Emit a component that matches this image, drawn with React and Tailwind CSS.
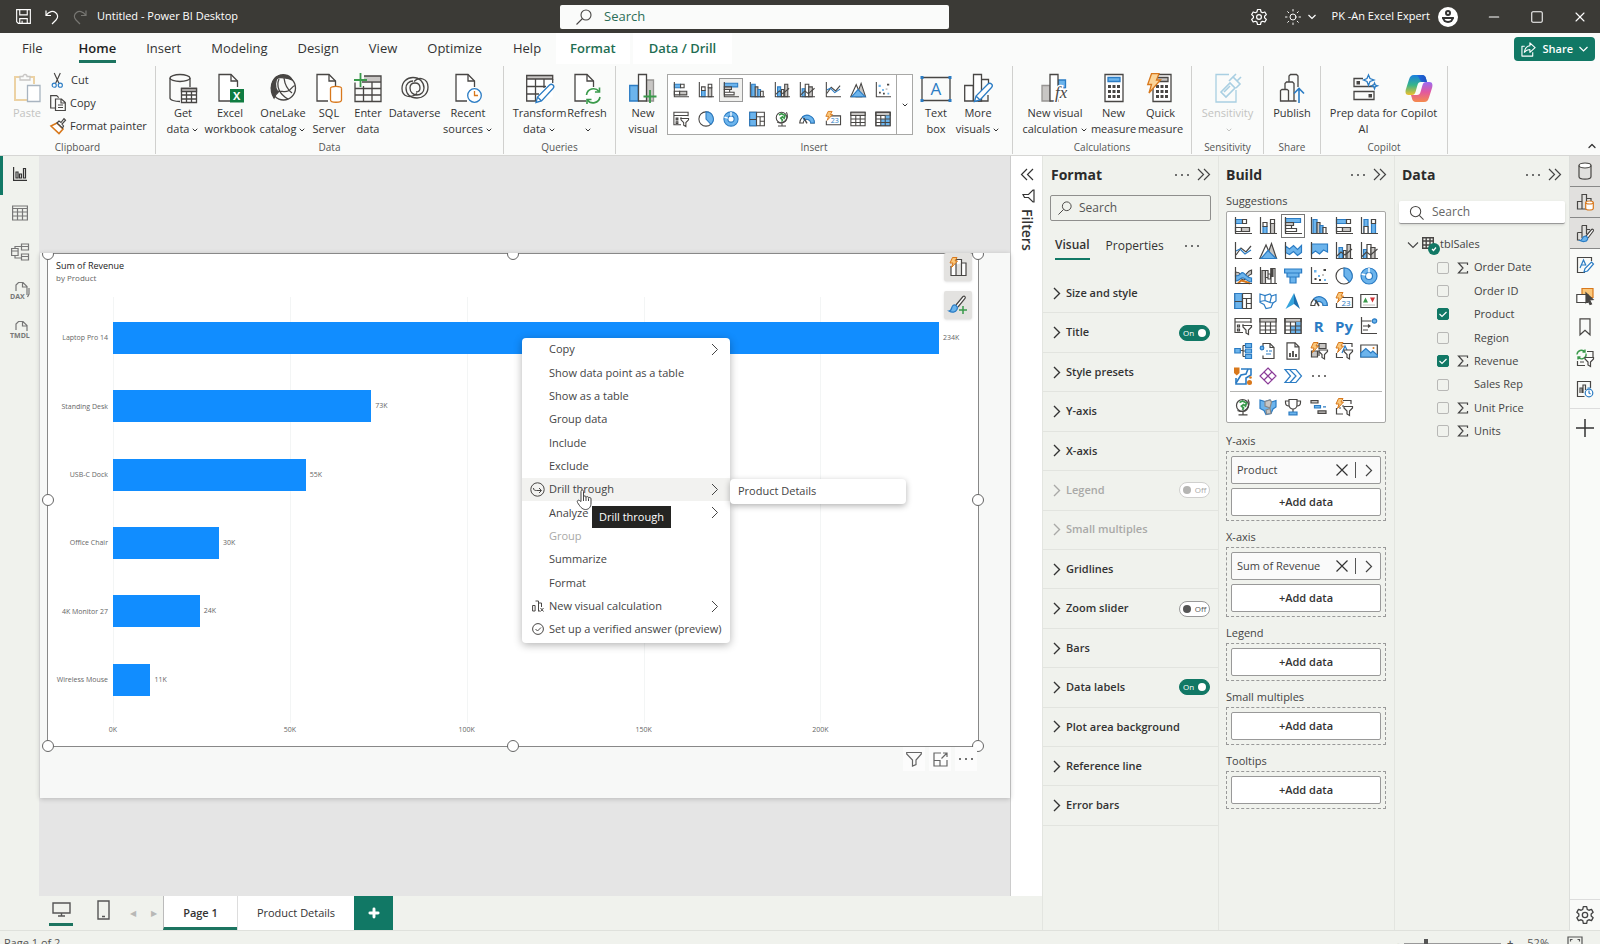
import React from 'react';
import { ChevronDown, ChevronUp, X, Minus, Square, Plus, Sun } from 'lucide-react';

const K = '#484644';
const B = '#6cb4ec';
const D = '#2b7cc4';
const G = '#c8c6c4';
const O = '#d8781c';
const N = '#3a9a4b';

function Svg({ size = 18, box = 18, w, h, stroke = K, sw = 1.2, className = '', children }) {
  return (
    <svg aria-hidden="true" width={w || size} height={h || size} viewBox={`0 0 ${w ? w : box} ${h ? h : box}`} fill="none"
      stroke={stroke} strokeWidth={sw} className={`shrink-0 overflow-visible ${className}`}>
      {children}
    </svg>
  );
}

const Right = ({ sw = 1.3 }) => <Svg w={8} h={13} stroke="currentColor" sw={sw}><path d="M1 1l5.500 5.500L1 12" /></Svg>;
const Down = ({ sw = 1.3 }) => <Svg w={12} h={8} stroke="currentColor" sw={sw}><path d="M1 1.500l5 5 5-5" /></Svg>;
const DoubleRight = ({ className = '' }) => (
  <Svg w={14} h={13} stroke="currentColor" className={className}><path d="M1 1l5.500 5.500L1 12M7 1l5.500 5.500L7 12" /></Svg>
);

const Axes = () => <path d="M1.5 0v16.5H18" />;
const Bolt = ({ x = 0, y = 0 }) => (
  <path transform={`translate(${x} ${y})`} d="M3.5 .5h4.5L6 4h2.5L2.5 10.500l1.500-4.500H1z" fill="#fbc77a" stroke={O} strokeWidth="1" />
);
const Funnel = ({ x = 9, y = 8 }) => (
  <path transform={`translate(${x} ${y})`} d="M0 .5h8.500v1.500L5.500 5v4.500l-2.500-1.500V5L0 2z" fill="#fff" />
);

/* ---- visual type glyphs, drawn on an 18 x 18 grid ---- */
const V = {
  stackedBar: <><path d="M1.500 2.500h7v4h-7z" fill={B} stroke={D} /><path d="M8.500 2.500h4v4h-4z" fill="#fff" /><path d="M1.500 10.500h6v4h-6z" fill="#fff" /><path d="M7.500 10.500h8v4h-8z" fill={G} /><Axes /></>,
  stackedCol: <><path d="M4 9.500h4v7H4z" fill={B} stroke={D} /><path d="M4 5.500h4v4H4z" /><path d="M11.500 6.500h4v10h-4z" fill={G} /><path d="M11.500 2.500h4v4h-4z" fill="#fff" /><Axes /></>,
  clusteredBar: <><path d="M1.500 1.500h15v4h-15z" fill={B} stroke={D} /><path d="M1.500 5.500h8v3h-8z" fill={G} /><path d="M1.500 8.500h6v3h-6zM1.500 11.500h11v3h-11z" fill="#fff" /><Axes /></>,
  clusteredCol: <><path d="M3 2.500h4v14H3z" fill={B} stroke={D} /><path d="M7 5.500h3v11H7z" fill={G} /><path d="M10 8.500h3v8h-3z" fill={B} stroke={D} /><path d="M13 10.500h3v6h-3z" fill="#fff" /><Axes /></>,
  fullBar: <><path d="M1.500 2.500h10v4h-10z" fill={B} stroke={D} /><path d="M11.500 2.500h4v4h-4z" fill="#fff" /><path d="M1.500 10.500h6v4h-6z" fill="#fff" /><path d="M7.500 10.500h8v4h-8z" fill={G} /><Axes /></>,
  fullCol: <><path d="M4 2.500h4v14H4z" fill={B} stroke={D} /><path d="M4 9.500h4v7H4z" fill="#fff" /><path d="M11.500 2.500h4v14h-4z" fill={B} stroke={D} /><path d="M11.500 2.500h4v4h-4z" fill="#fff" /><Axes /></>,
  line: <><path d="M2 13l5-7 5 4 5-6" /><path d="M2 9l4-2 5 5 6-4" stroke={D} /><Axes /></>,
  area: <><path d="M7 16.500L12.500 1.500l5 15z" fill={G} /><path d="M.8 16.500L7 3l6 13.500z" fill="#fff" /><path d="M2 16.500l7-8 8 8z" fill={B} stroke={D} /></>,
  stackedArea: <><path d="M1.500 9l4 3 5-4 3 2 4-3v9.500h-16z" fill="#fff" stroke="none" /><path d="M1.500 4l4 3 4-3.500 4 4 4-4v7l-4 3-4-4-4 3-4-2z" fill={B} stroke={D} /><Axes /></>,
  fullArea: <><path d="M1.500 2h16v8l-4-2-4 4-4-3-4 3z" fill={B} stroke={D} /><Axes /></>,
  lineStacked: <><path d="M4 5.500h3.500v11H4z" fill={B} stroke={D} /><path d="M8.500 8.500H11v8H8.500z" fill="#fff" /><path d="M12 2.500h3.500v14H12z" fill={G} /><path d="M2 14l4-4 4 3 7-6" stroke={K} /><Axes /></>,
  lineClustered: <><path d="M3.500 7.500h3.500v9H3.500z" fill={B} stroke={D} /><path d="M7 2.500h4v14H7z" fill="#fff" /><path d="M11 5.500h4v11h-4z" fill={G} /><path d="M1.500 15l5-5 4 3 7-6" /><Axes /></>,
  ribbon: <><path d="M1.500 5c6 0 5 4 8 4s3-5 8-6v4c-4 1-5 6-8 6s-3-4-8-4z" fill={G} /><path d="M1.500 9c6 0 5-5 8-3s3 5 8 5v4c-4 0-5-3-8-4s-4 3-8 3z" fill={B} stroke={D} /><path d="M4 16.500l3-3 4 1 5 2" stroke={O} strokeWidth="2" /><Axes /></>,
  waterfall: <><path d="M3 3.500h3.500v13H3z" fill={G} /><path d="M6.500 3.500H9v7H6.500zM9 7h2.500v5H9z" fill="#fff" /><path d="M12 1.500h4v15h-4z" fill="#fff" /><path d="M12 1.500h2v8h-2z" fill={K} /><Axes /></>,
  funnel: <><path d="M.6 2h17v4h-17zM3 6h12v4H3zM6 10h6v6H6z" fill={B} stroke={D} /></>,
  scatter: <><path d="M4 3h2.500v2.500H4zM8 8h2v2H8zM14 12h2v2h-2z" fill={B} stroke="none" /><path d="M13.500 2H16v2h-2.500zM4.500 11h2v2h-2zM9 12h2v2H9z" fill={K} stroke="none" /><path d="M12 7h2v2h-2z" fill={G} stroke="none" /><Axes /></>,
  pie: <><circle cx="9" cy="9" r="8" fill="#fff" /><path d="M9 9V1a8 8 0 0 1 5.500 14z" fill={B} stroke={D} /></>,
  donut: <><circle cx="9" cy="9" r="8" fill={B} stroke={D} /><circle cx="9" cy="9" r="3.500" fill="#fff" stroke={D} /><path d="M9 1v4.500M1.500 7l4 1" stroke="#fff" strokeWidth="1.500" /></>,
  treemap: <><path d="M.8 1.500h16.500v15H.8z" fill="#fff" /><path d="M.8 1.500h7.500v15H.8z" fill={B} stroke={D} /><path d="M.8 9.500h7.500M8.500 1.500v15M8.500 6.500h9M12.500 6.500v10M12.500 11.500h5" /></>,
  map: <><circle cx="8.500" cy="7.500" r="6" fill="#fff" /><path d="M5.500 4.500l3-1.500 4 2-1 3-2-1.500-2 1.500 2 2-1 2" stroke={N} strokeWidth="1.800" /><path d="M14 1.500a8 8 0 0 1-10.500 11M9 14v2.500M4.500 16.800h9" /></>,
  filled: <><path d="M1 2l5 1.500L11 2l1.500 2L17 2.500V9l-3 2-2 4.500-5 1-2-4-4-2z" fill="#fff" stroke={D} /><path d="M6 3.500v5l5 2 1.500-6.500M6 8.500l-5 1M11 10.500l3 .5" stroke={D} /></>,
  filledShape: <><path d="M1 2l5 1.500L11 2l1.500 2L17 2.500V9l-3 2-2 4.500-5 1-2-4-4-2z" fill={B} stroke={D} /><path d="M6 3.500l5-1.500 1.500 2-1.500 6-5-2zM7 12l4-1.500 1 5-4.500.500z" fill={G} stroke="#888" /></>,
  azure: <><path d="M10 1L1.500 17 10 12z" fill="#35a3dc" stroke="none" /><path d="M10 1v11l6 5z" fill="#1b6fb0" stroke="none" /></>,
  gauge: <><path d="M.8 13.500a8.200 8.200 0 0 1 16.400 0h-4a4.200 4.200 0 0 0-8.400 0z" fill="#fff" /><path d="M4 6.500a8.200 8.200 0 0 1 13.200 7h-4a4.200 4.200 0 0 0-7-3z" fill={B} stroke={D} /><path d="M9 14l-3.500-6" strokeWidth="1.600" /></>,
  card: <><path d="M3 5.500h14.500v10H1.500V11" fill="#fff" /><text x="6.500" y="13.500" fontSize="8" fill={D} stroke="none">23</text><Bolt /></>,
  kpi: <><path d="M.8 2.500h16.500v13H.8z" fill="#fff" /><path d="M3 10.500l2.500-5 2.500 5z" fill={N} stroke="none" /><path d="M10 5.500h5l-2.500 5z" fill="#d13438" stroke="none" /><path d="M3 13h12" stroke={G} /></>,
  slicer: <><path d="M17 6V1.500H1v14h8M1 5h16" /><path d="M3.500 8h2v2h-2zM3.500 12h2v2h-2zM8 8h2" stroke={K} fill={G} /><Funnel /></>,
  table: <><path d="M1 1.500h16v15H1z" fill="#fff" /><path d="M1 1.500h16V5H1z" fill={G} /><path d="M1 9h16M1 13h16M6.500 5v11.500M11.500 5v11.500" /></>,
  matrix: <><path d="M1 1.500h16v15H1z" fill="#fff" /><path d="M1 1.500h16V5H1z" fill={G} /><path d="M6.500 9h10.500v7.500H6.500zM11.500 5H17v4h-5.500z" fill={B} stroke="none" /><path d="M1 9h16M1 13h16M6.500 5v11.500M11.500 5v11.500M1 1.500h16v15H1z" /></>,
  influencers: <><path d="M1.500 0v16.500H17M1.500 4h10M3 9h7M3 13h5M8 7.500l2 1.500-2 1.500" /><circle cx="14.500" cy="4" r="2.200" fill={B} stroke={D} /></>,
  decomp: <><path d="M6 8.500h3M9 3.500v11M9 3.500h3M9 9h3M9 14.500h3" /><path d="M.8 6.500h5.500v4.500H.8zM11.500 1.500h6v4h-6zM11.500 7h6v4h-6zM11.500 12.500h6v4h-6z" fill={B} stroke={D} /></>,
  qa: <><path d="M4 8V1.500h7l4 4v11H4v-3" fill="#fff" /><path d="M11 1.500v4h4" /><path d="M7 9h2M10 9h3M7 12h5" stroke={D} /><circle cx="3" cy="6" r="1.800" fill={B} stroke={D} /></>,
  paginated: <><path d="M3 .8h8l4 4v12.400H3z" fill="#fff" /><path d="M11 .8v4h4" /><path d="M6 11v4M9 9v6M12 12v3" strokeWidth="1.800" /></>,
  metrics: <><path d="M9 1.500h7v5H9zM1.500 9h6v6h-6z" fill={G} /><path d="M9 9v5M5 4h4" /><Funnel x={9} y={7.500} /><Bolt /></>,
  narrative: <><path d="M8 1.500h9V5M1.500 11v4.500H8" /><path d="M7 11l3-7 2 4" stroke={D} /><Funnel x={9} y={7.500} /><Bolt /></>,
  image: <><path d="M.8 3h16.500v12H.8z" fill="#fff" /><path d="M.8 15V11l5-4.500 5 4.500 2-2 4.500 4v2z" fill={B} stroke={D} /><circle cx="13.500" cy="6" r="1" fill={O} stroke="none" /></>,
  arcgis: <><path d="M7 2h10v6l-5 3v6H2v-6" fill="#fff" stroke={D} strokeWidth="1.600" /><path d="M2 16l5-8 5-1 2-5" stroke={D} strokeWidth="1.600" /><path d="M0 .5h5.500V6L2.800 8.500 0 6z" fill={O} stroke="none" /><circle cx="15.500" cy="15.500" r="2.500" fill={O} stroke="none" /><circle cx="16.500" cy="10.500" r="1.300" fill={O} stroke="none" /></>,
  powerapps: <><path d="M9 1l4 4-4 4-4-4zM5 5l4 4-4 4-4-4zM13 5l4 4-4 4-4-4zM9 9l4 4-4 4-4-4z" fill="#fff" stroke="#8a3a97" /></>,
  automate: <><path d="M1 2.500h11l5.500 6.500-5.500 6.500H1L6.500 9z" fill="#fff" stroke={D} /><path d="M5.500 2.500L12 9l-6 6.500M9 12l3-3" stroke={D} /></>,
  more: <><circle cx="3" cy="9" r="1" fill={K} stroke="none" /><circle cx="9" cy="9" r="1" fill={K} stroke="none" /><circle cx="15" cy="9" r="1" fill={K} stroke="none" /></>,
  trophy: <><path d="M5 1.500h8V7a4 4 0 0 1-8 0z" fill="#fff" /><path d="M5 3H1.500v1.500C1.500 7 3 8 5 8M13 3h3.500v1.500c0 2.500-1.500 3.500-3.500 3.500M9 11v3" /><path d="M5 14h8v2.800H5z" fill={B} stroke={D} /></>,
  gantt: <><path d="M1 2.500h7v2.500H1zM8 12.800h8v2.500H8z" fill={G} /><path d="M4.500 7.500h6V10h-6zM13 8.800h3" fill={B} stroke={D} /></>,
  newSlicer: <><path d="M8 2.500h8V6M1.500 10v6H8M4 10h2M7 8h2" /><Funnel x={9} y={8} /><Bolt /></>
};

function VisualIcon({ name, size }) {
  if (name === 'R' || name === 'Py') {
    return <span className="text-[15px] leading-6 font-bold text-[#2b7cc4]">{name}</span>;
  }
  return <Svg size={size}>{V[name]}</Svg>;
}

const GALLERY = [
  'stackedBar', 'stackedCol', 'clusteredBar', 'clusteredCol', 'lineStacked', 'lineClustered', 'line', 'area', 'scatter',
  'slicer', 'pie', 'donut', 'treemap', 'map', 'gauge', 'card', 'table', 'matrix'
];

const SUGGESTIONS = [
  'stackedBar', 'stackedCol', 'clusteredBar', 'clusteredCol', 'fullBar', 'fullCol',
  'line', 'area', 'stackedArea', 'fullArea', 'lineStacked', 'lineClustered',
  'ribbon', 'waterfall', 'funnel', 'scatter', 'pie', 'donut',
  'treemap', 'filled', 'azure', 'gauge', 'card', 'kpi',
  'slicer', 'table', 'matrix', 'R', 'Py', 'influencers',
  'decomp', 'qa', 'paginated', 'metrics', 'narrative', 'image',
  'arcgis', 'powerapps', 'automate', 'more'
];

const EXTRA = ['map', 'filledShape', 'trophy', 'gantt', 'newSlicer'];

/* ---- ribbon glyphs, drawn on a 28 x 30 grid ---- */
const Big = ({ children, stroke = K }) => <Svg w={28} h={30} stroke={stroke} sw={1.3}>{children}</Svg>;
const Page = () => <><path d="M4 1.500h13l6 6V28H4z" fill="#fff" stroke="none" /><path d="M15 28H4V1.500h12l6.500 6.500V14" /><path d="M16 1.500V8h6.500" /></>;
const Pencil = ({ x = 10, y = 10 }) => (
  <path transform={`translate(${x} ${y})`} d="M.5 18.500l1.500-5.500L14 1c1-1 2.500-1 3.500 0s1 2.500 0 3.500L6 17zM2 13l4 4" fill="#fff" stroke={D} strokeWidth="1.300" />
);

const RI = {
  paste: <Big><path d="M7 4H2v23h12" stroke="#ecd2a4" strokeWidth="2" /><path d="M17 4h4v7" stroke="#ecd2a4" strokeWidth="2" /><path d="M7 7V3.500h3a2 2 0 0 1 4 0h3V7z" stroke={G} /><path d="M14.500 12.500h12.500v16H14.500z" stroke="#a8b4c0" fill="#fff" /></Big>,
  getData: <Big><ellipse cx="11" cy="5" rx="10" ry="3.500" /><path d="M1 5v20c0 2 4.500 3.500 10 3.500M21 5v9" /><path d="M12.500 15.500h15v14h-15z" fill="#fff" /><path d="M12.500 15.500h15v3h-15z" fill={G} /><path d="M12.500 22h15M12.500 26h15M17.500 18v11.500M22.500 18v11.500" /></Big>,
  excel: <Big><g transform="translate(-1)"><Page /></g><path d="M14 16h14v13.500H14z" fill="#107c41" stroke="none" /><text x="17" y="27" fontSize="11" fontWeight="700" fill="#fff" stroke="none">X</text></Big>,
  onelake: <Big><path d="M10 2.500C2 5 0 17 5 25c1-3 2-4 4-5.500C5 14 6 7 10 2.500z" fill={K} /><circle cx="14.500" cy="15" r="12" /><path d="M8 5c3-5 13-4 15 2-4-2-11-3-15-2z" fill={K} /><path d="M10 6c-3 7 0 15 9 20M15 5c1 8 4 12 8 15M6 20c3-4 9 0 13-2s5-6 7-5" /></Big>,
  sql: <Big><g transform="translate(-2)"><Page /></g><ellipse cx="21" cy="15.500" rx="5.500" ry="2.200" stroke={O} fill="#fff" /><path d="M15.500 15.500v11.500c0 3 11 3 11 0V15.500" stroke={O} fill="#fff" /></Big>,
  enter: <Big><path d="M10 3h17v5H10z" fill={G} stroke="none" /><path d="M1 9.500V28.500h26V3H10" /><path d="M8 9h19M1 15.500h26M1 22h26M9.500 13v15.500M18 9v19.500" /><path d="M6.500 0v14M0 7h13" stroke={N} strokeWidth="1.800" /></Big>,
  dataverse: <Big><path d="M16 20.500C10 26 1 24 1 15.500 1 9 6 4.500 12 4.500c7 0 11 5 11 10.500 0 4-3 7-7 7s-7-3-7-7 2.500-5 5-5 5 1.500 5 5-2 4-4 4" /><path d="M13 8.500C18 3 27 5.500 27 14c0 7-5 11-11 11-7 0-11-4-11-10 0-4 3-7 7-7" /></Big>,
  recent: <Big><g transform="translate(-2)"><Page /></g><circle cx="20.500" cy="22.500" r="6.800" fill="#fff" stroke={D} /><path d="M20.500 18v4.500h3.500" stroke={O} /></Big>,
  transform: <Big><path d="M.7 2.500h26v22h-26z" fill="#fff" stroke="none" /><path d="M.7 2.500h26V6h-26z" fill={G} /><path d="M26.700 6v4M10 28H.7V6M.7 13.500H20M.7 21H13M9.500 6v22M18 6v9" /><Pencil x={9.500} y={11} /></Big>,
  refresh: <Big><g transform="translate(-2)"><Page /></g><path d="M13.500 22a7 7 0 0 1 12.500-3.500M27 24a7 7 0 0 1-12.500 3" stroke={N} strokeWidth="1.600" /><path d="M26.500 14.500v4.500H22M14 31v-4.500h4.500" stroke={N} strokeWidth="1.600" /></Big>,
  newVisual: <Big><path d="M.7 12.500h8.500V28H.7z" fill={B} stroke={D} /><path d="M17.500 7h7v21h-7z" fill={G} stroke="#979593" /><path d="M9.500 1.500h8V28h-8z" fill="#fff" /><path d="M21 17v13M14.500 23.500h13" stroke={N} strokeWidth="1.800" /></Big>,
  textBox: <Svg w={32} h={30} sw={1.3}><path d="M2 4.500h28v23H2z" /><path d="M.5 3h3v3h-3zM28.500 3h3v3h-3zM.5 26h3v3h-3zM28.500 26h3v3h-3z" fill={D} stroke="none" /><text x="10.500" y="22" fontSize="17" fill={D} stroke="none">A</text></Svg>,
  moreVisuals: <Big><path d="M.7 12.500h8.500V28H.7zM17.500 6.500h7V12M9.500 1.500h8V28h-8z" fill="#fff" /><path d="M14 28h10v-6" /><Pencil x={10} y={10} /></Big>,
  calc: <Big><path d="M1 12.500h8V28H1z" fill={G} stroke="#979593" /><path d="M17.500 7h7v8h-7z" fill={B} stroke={D} /><path d="M9 1.500h8V28H9z" fill="#fff" /><text x="14" y="25" fontSize="17" fontStyle="italic" fontFamily="Liberation Serif" fill={K} stroke="#fff" strokeWidth="3" paintOrder="stroke">fx</text></Big>,
  measure: <Big><path d="M5 1.500h18V28.500H5z" fill="#fff" /><path d="M8 4.500h12v4H8z" fill={B} stroke={D} /><path d="M8 12h3v3H8zM12.500 12h3v3h-3zM17 12h3v3h-3zM8 17h3v3H8zM12.500 17h3v3h-3zM17 17h3v3h-3zM8 22h3v3H8zM12.500 22h3v3h-3zM17 22h3v3h-3z" fill={K} stroke="none" /></Big>,
  quick: <Big><path d="M6 1.500h18V28.500H6z" fill="#fff" /><path d="M9 4.500h12v4H9z" fill={G} /><path d="M9 12h3v3H9zM13.500 12h3v3h-3zM18 12h3v3h-3zM9 17h3v3H9zM13.500 17h3v3h-3zM18 17h3v3h-3zM9 22h3v3H9zM13.500 22h3v3h-3zM18 22h3v3h-3z" fill={K} stroke="none" /><path d="M4.500 .7h7.500L9.500 7h4L2 20l2.500-8.500H.7z" fill="#fbd59a" stroke={O} /></Big>,
  sensitivity: <Big stroke="#a9cfe2"><path d="M15 1.500H2V29h20V17" /><path d="M7 19l9-9 5 5-9 9zM10 19l6-6M15 8l4-4 7 7-4 4M19 4l3-3M23 8l4-4" strokeWidth="1.600" /></Big>,
  publish: <Big><path d="M2.500 28V17.500l1.500-1h5l1.500 1V28zM7 16V10.500l1.500-1.500h6L16 10.500V28M11 9V3l1.500-1.500h6L20 3v11M10.500 28h8" /><path d="M21 30V15.500M16 20.500l5-5 5 5" stroke={D} strokeWidth="1.600" /></Big>,
  prep: <Big><path d="M13 5.500H4v8h19v-2M4 18.500h20v8H4z" /><path d="M6.500 8H10v3.500H6.500zM18.500 21H22v3.500h-3.500z" fill={K} stroke="none" /><path d="M18.500 2l1.500 3.500L24 7l-4 1.500-1.500 4L17 8.500 13.500 7 17 5.500zM24.500 10l.8 2 2.200.8-2.200.800-.8 2.200-.8-2.200-2.200-.8 2.200-.8z" stroke={D} fill="#fff" /></Big>,
  copilot: (
    <Svg w={28} h={30} stroke="none">
      <defs>
        <linearGradient id="cpA" x1="0" y1="0" x2="0" y2="1"><stop offset="0" stopColor="#1a7fe0" /><stop offset=".5" stopColor="#35b58a" /><stop offset="1" stopColor="#f0c02c" /></linearGradient>
        <linearGradient id="cpB" x1="0" y1="0" x2="0" y2="1"><stop offset="0" stopColor="#9a6bf2" /><stop offset=".5" stopColor="#e2589f" /><stop offset="1" stopColor="#f58a4c" /></linearGradient>
        <linearGradient id="cpC" x1="0" y1="0" x2="1" y2="0"><stop offset="0" stopColor="#1b6ee0" /><stop offset="1" stopColor="#2050c0" /></linearGradient>
      </defs>
      <path d="M9 2h8c2.500 0 3.500 1.500 4 3.500l1 3.500h-6c-2 0-3 1-3.500 3l-2 7c-.7 2-1.500 3-3.500 3H3.500C.5 22 0 19 1 16L4 6.500C5 3.500 6 2 9 2z" fill="url(#cpA)" />
      <path d="M12 2h5c2.500 0 3.500 1.500 4 3.500l1 3.500h-5c-1.500 0-2.500-4-5-7z" fill="url(#cpC)" />
      <path d="M19 29h-8c-2.500 0-3.500-1.500-4-3.500L6 22h6c2 0 3-1 3.500-3l2-7c.7-2 1.500-3 3.500-3h3.500c3 0 3.500 3 2.500 6l-3 9.500C23 27.500 22 29 19 29z" fill="url(#cpB)" />
    </Svg>
  )
};

function RibbonButton({ icon, lines, chevron, disabled, className }) {
  return (
    <button type="button" disabled={disabled}
      className={`flex shrink-0 flex-col items-center pt-[7px] text-[11px] leading-4 whitespace-nowrap ${disabled ? 'text-[#c3c3c1]' : 'text-[#333]'} ${className}`}>
      {RI[icon]}
      <span className="mt-0.5">{lines[0]}</span>
      <span className="flex h-4 items-center">
        {lines[1]}
        {chevron && <ChevronDown className="mt-0.5 ml-0.5 h-2 w-2" strokeWidth={3} />}
      </span>
    </button>
  );
}

function RibbonGroup({ name, className = '', children }) {
  return (
    <section aria-label={name} className="flex shrink-0 flex-col border-r border-[#d0d0ce]">
      <div className={`flex flex-1 ${className}`}>{children}</div>
      <div className="text-center text-[10px] leading-[13px] text-[#555]">{name}</div>
    </section>
  );
}

function Gear({ size = 18, stroke = '#fff' }) {
  return (
    <Svg size={size} box={24} stroke={stroke} sw={1.6}>
      <circle cx="12" cy="12" r="3.200" />
      <path d="M10 2h4l.7 3.200 2 1.100 3.100-1 2 3.500-2.400 2.100v2.200l2.400 2.100-2 3.500-3.100-1-2 1.100L14 22h-4l-.7-3.200-2-1.100-3.100 1-2-3.500 2.400-2.100v-2.200L2.200 8.800l2-3.500 3.100 1 2-1.100z" strokeLinejoin="round" />
    </Svg>
  );
}

function Magnifier({ size = 16, stroke = K, flip = false }) {
  return (
    <Svg size={size} box={16} stroke={stroke} sw={1.1}>
      {flip
        ? <><circle cx="7" cy="7" r="5.500" /><path d="M11 11l4.500 4.500" /></>
        : <><circle cx="10" cy="6" r="5" /><path d="M6.500 9.500L.5 15.500" /></>}
    </Svg>
  );
}

function TitleBar() {
  return (
    <header className="flex h-[33px] shrink-0 items-center bg-[#3b3a36] text-[11px] text-white">
      <div className="flex w-[35%] items-center pl-4">
        <button type="button" aria-label="Save"><Svg size={15} box={16} stroke="#fff"><path d="M.7.7h14.600v14.600H2.500L.7 13.500zM4 .7v5.500h8V.7M4 15.300v-5h8v5M6.500 15v-2.500" /></Svg></button>
        <button type="button" aria-label="Undo" className="ml-3.5"><Svg size={14} box={14} stroke="#fff"><path d="M1 .5v5h5M1 5.500C4 1 8 .5 10.500 2.500s3 5 .500 7.500L7 14" /></Svg></button>
        <button type="button" aria-label="Redo" className="ml-3.5"><Svg size={14} box={14} stroke="#777672"><path d="M13 .5v5H8M13 5.500C10 1 6 .5 3.500 2.500s-3 5-.500 7.500L7 14" /></Svg></button>
        <span className="ml-2.5">Untitled - Power BI Desktop</span>
      </div>
      <label className="flex h-6 w-[389px] items-center gap-3 rounded-xs bg-[#fafbfa] pl-4">
        <Magnifier size={16} />
        <input type="search" placeholder="Search" aria-label="Search" className="min-w-0 flex-1 bg-transparent text-[13px] outline-none placeholder:text-[#2c6e58]" />
      </label>
      <div className="flex flex-1 items-center justify-end">
        <button type="button" aria-label="Settings"><Gear size={18} /></button>
        <button type="button" aria-label="Theme" className="ml-4 flex items-center gap-1.5"><Sun className="h-[18px] w-[18px]" strokeWidth={1.3} /><Svg w={8} h={6} stroke="#fff"><path d="M.5 1L4 4.500 7.500 1" /></Svg></button>
        <span className="ml-4">PK -An Excel Expert</span>
        <span className="ml-2 flex h-5 w-5 flex-col items-center justify-center gap-px rounded-full bg-white">
          <span className="h-1.5 w-1.5 rounded-full border-2 border-[#333]" />
          <span className="h-1.5 w-3 rounded-b-full border-2 border-[#333]" />
        </span>
        <button type="button" aria-label="Minimize" className="ml-7"><Minus className="h-4 w-4" strokeWidth={1.8} /></button>
        <button type="button" aria-label="Maximize" className="ml-7"><Square className="h-3.5 w-3.5" strokeWidth={1.8} /></button>
        <button type="button" aria-label="Close" className="mr-3 ml-7"><X className="h-4 w-4" strokeWidth={1.6} /></button>
      </div>
    </header>
  );
}

const TABS = [
  ['File', 'ml-[22px]'], ['Home', 'ml-[36px]'], ['Insert', 'ml-[30px]'], ['Modeling', 'ml-[30px]'], ['Design', 'ml-[30px]'],
  ['View', 'ml-[30px]'], ['Optimize', 'ml-[30px]'], ['Help', 'ml-[31px]']
];

function Tabs() {
  return (
    <nav className="flex h-[33px] shrink-0 items-start text-[13px] text-[#333]">
      {TABS.map(([name, margin]) => (
        <button type="button" key={name}
          className={`${margin} h-[30px] border-b-[3px] pt-1 ${name === 'Home' ? 'border-[#1c7460] font-semibold text-[#1f1f1f]' : 'border-transparent'}`}>
          {name}
        </button>
      ))}
      <button type="button" className="ml-[15px] h-[31px] bg-white px-3.5 font-semibold text-[#1f6e53]">Format</button>
      <button type="button" className="ml-[3px] h-[31px] bg-white px-4 font-semibold text-[#1f6e53]">Data / Drill</button>
      <button type="button" className="mt-1 mr-[5px] ml-auto flex h-6 items-center gap-1.5 rounded-sm bg-[#117865] px-[7px] text-[11px] font-semibold text-white">
        <Svg size={15} box={16} stroke="#fff"><path d="M4 4.500H1v10.500h11.500V11M9.500 1v3C5.500 4.500 4 7.500 3.500 11c1.500-2 3-3 6-3v3l5.500-5z" strokeLinejoin="round" /></Svg>
        Share
        <Svg w={9} h={6} stroke="#fff"><path d="M.5 1l4 4 4-4" /></Svg>
      </button>
    </nav>
  );
}

function Ribbon() {
  return (
    <div className="flex h-[89px] shrink-0 pb-px text-[#333]">
      <RibbonGroup name="Clipboard" className="w-[155px] pl-2">
        <RibbonButton icon="paste" lines={['Paste', '']} disabled className="w-[38px]" />
        <div className="flex flex-col gap-[3px] pt-1 pl-1 text-[11px]">
          <button type="button" className="flex h-5 items-center gap-1.5">
            <Svg size={15} box={16}><path d="M4.500 0l5 11M11 0L6 11" /><circle cx="4.500" cy="13" r="2.200" stroke={D} /><circle cx="11" cy="13" r="2.200" stroke={D} /></Svg>Cut
          </button>
          <button type="button" className="flex h-5 items-center gap-1">
            <Svg size={16} box={16}><path d="M5 13H.7V.7h6l2 2M5.500 4h6l3.800 3.500v8H5.500zM11 4v4h4M8 10h5M8 12.500h5" /></Svg>Copy
          </button>
          <button type="button" className="flex h-5 items-center gap-1 whitespace-nowrap">
            <Svg size={16} box={16}><path d="M1 8l6-3 6 6-4 4.500z" fill="#fff" stroke={O} strokeWidth="1.600" /><path d="M7 5l2-2 2 1.500L14 .7l1.500 1.500L12 6l1.500 2-1 2z" fill="#fff" /></Svg>Format painter
          </button>
        </div>
      </RibbonGroup>
      <RibbonGroup name="Data" className="pr-[9px] pl-[7px]">
        <RibbonButton icon="getData" lines={['Get', 'data']} chevron className="w-10" />
        <RibbonButton icon="excel" lines={['Excel', 'workbook']} className="w-[54px]" />
        <RibbonButton icon="onelake" lines={['OneLake', 'catalog']} chevron className="w-[52px]" />
        <RibbonButton icon="sql" lines={['SQL', 'Server']} className="w-10" />
        <RibbonButton icon="enter" lines={['Enter', 'data']} className="w-[38px]" />
        <RibbonButton icon="dataverse" lines={['Dataverse', '']} className="w-[55px]" />
        <RibbonButton icon="recent" lines={['Recent', 'sources']} chevron className="w-[52px]" />
      </RibbonGroup>
      <RibbonGroup name="Queries" className="pr-[8px] pl-2">
        <RibbonButton icon="transform" lines={['Transform', 'data']} chevron className="w-[55px]" />
        <RibbonButton icon="refresh" lines={['Refresh', '']} chevron className="w-10" />
      </RibbonGroup>
      <RibbonGroup name="Insert" className="px-2.5">
        <RibbonButton icon="newVisual" lines={['New', 'visual']} className="w-[34px]" />
        <div className="mt-2 ml-[7px] flex h-[61px] w-[246px] border border-[#a8a8a6] bg-white">
          <div className="grid flex-1 grid-cols-9 grid-rows-2 place-items-center py-px">
            {GALLERY.map(name => (
              <button type="button" key={name} aria-label={name}
                className={`flex h-6 w-6 items-center justify-center ${name === 'clusteredBar' ? 'border border-[#999] bg-[#f0f0ee]' : ''}`}>
                <VisualIcon name={name} size={16} />
              </button>
            ))}
          </div>
          <button type="button" aria-label="More visual types" className="flex w-4 items-center justify-center border-l border-[#a8a8a6]">
            <ChevronDown className="h-2 w-2" strokeWidth={3} />
          </button>
        </div>
        <RibbonButton icon="textBox" lines={['Text', 'box']} className="ml-[5px] w-9" />
        <RibbonButton icon="moreVisuals" lines={['More', 'visuals']} chevron className="w-12" />
      </RibbonGroup>
      <RibbonGroup name="Calculations" className="px-[7px]">
        <RibbonButton icon="calc" lines={['New visual', 'calculation']} chevron className="w-[70px]" />
        <RibbonButton icon="measure" lines={['New', 'measure']} className="w-[47px]" />
        <RibbonButton icon="quick" lines={['Quick', 'measure']} className="w-[47px]" />
      </RibbonGroup>
      <RibbonGroup name="Sensitivity" className="px-[7px]">
        <RibbonButton icon="sensitivity" lines={['Sensitivity', '']} chevron disabled className="w-[57px]" />
      </RibbonGroup>
      <RibbonGroup name="Share" className="px-[7px]">
        <RibbonButton icon="publish" lines={['Publish', '']} className="w-[42px]" />
      </RibbonGroup>
      <RibbonGroup name="Copilot" className="pr-2 pl-[7px]">
        <RibbonButton icon="prep" lines={['Prep data for', 'AI']} className="w-[71px]" />
        <RibbonButton icon="copilot" lines={['Copilot', '']} className="w-10" />
      </RibbonGroup>
      <button type="button" aria-label="Collapse ribbon" className="mt-auto mr-0.5 mb-0.5 ml-auto"><ChevronUp className="h-3 w-3" strokeWidth={2.600} /></button>
    </div>
  );
}

function LeftRail() {
  return (
    <nav className="flex w-[39px] shrink-0 flex-col bg-[#f0f2ed] *:flex *:h-[39px] *:items-center *:justify-center *:pb-[3px] *:text-[#777]">
      <button type="button" aria-label="Report view" className="border-l-[3px] border-[#117865] pr-[2px]">
        <Svg size={14} box={14} stroke="#333"><path d="M.6 0v13.400H14M3 5h2v6H3zM6.500 7h2v4h-2zM10.500 1.500h2V11h-2z" /></Svg>
      </button>
      <button type="button" aria-label="Table view">
        <Svg size={16} box={16} stroke="#777"><path d="M.6 1h14.800v14H.6zM.6 3.500h14.800M.6 7h14.800M.6 11h14.800M5.500 3.500V15M10.500 3.500V15" /></Svg>
      </button>
      <button type="button" aria-label="Model view">
        <Svg size={18} stroke="#777"><path d="M.6 5.500h6.500v7H.6zM.6 8h6.500M10.500 1h7v6h-7zM10.500 3.500h7M10.500 11h7v6h-7zM10.500 13.500h7M4 5.500V3.500h6.500M4 12.500v2.500h6.500" /></Svg>
      </button>
      <button type="button" className="relative">
        <Svg size={18} stroke="#777"><path d="M5 9V3l2.500-2.500H12l4 4V13M11.500 1v4H16M18 6v6l-1.500 3" /></Svg>
        <span className="absolute top-5 left-2.5 bg-[#f0f2ed] text-[7px] leading-[8px] font-bold">DAX</span>
      </button>
      <button type="button" className="relative">
        <Svg size={18} stroke="#777"><path d="M5 9V3l2.500-2.500H12l4 4V10M11.500 1v4H16" /></Svg>
        <span className="absolute top-5 left-2.5 bg-[#f0f2ed] text-[7px] leading-[8px] font-bold">TMDL</span>
      </button>
    </nav>
  );
}

const MAX = 233.5;
const SALES = [
  ['Laptop Pro 14', 233.5, '234K'], ['Standing Desk', 73, '73K'], ['USB-C Dock', 54.5, '55K'],
  ['Office Chair', 30, '30K'], ['4K Monitor 27', 24.5, '24K'], ['Wireless Mouse', 10.6, '11K']
];
const TICKS = [0, 50, 100, 150, 200];

function Handle({ className }) {
  return <span className={`absolute h-3 w-3 rounded-full border-[1.5px] border-[#666] bg-white ${className}`} />;
}

function BarChart() {
  return (
    <figure className="flex min-h-0 flex-1 flex-col text-[7px] text-[#666]">
      <div className="relative flex min-h-0 flex-1 flex-col pt-[7px] pb-[9px]">
        <div className="absolute inset-y-0 right-[39px] left-[65px]">
          {TICKS.map(t => (
            <span key={t} className="absolute inset-y-0 w-px bg-[#f3f5f5]" style={{ left: `${(t / MAX) * 100}%` }} />
          ))}
        </div>
        {SALES.map(([name, value, label]) => (
          <div key={name} className="relative flex flex-1 items-center pr-[39px]">
            <span className="w-[65px] shrink-0 pt-px pr-[5px] text-right whitespace-nowrap">{name}</span>
            <div className="flex flex-1 items-center">
              <span className="h-8 shrink-0 bg-[#118dff]" style={{ width: `${(value / MAX) * 100}%` }} />
              <span className="w-0 pl-1">{label}</span>
            </div>
          </div>
        ))}
      </div>
      <div className="relative mr-[39px] mb-[9px] ml-[65px] h-3.5 leading-[14px]">
        {TICKS.map(t => (
          <span key={t} className="absolute -translate-x-1/2" style={{ left: `${(t / MAX) * 100}%` }}>{t}K</span>
        ))}
      </div>
    </figure>
  );
}

const MENU = [
  { label: 'Copy', sub: true },
  { label: 'Show data point as a table' },
  { label: 'Show as a table' },
  { label: 'Group data' },
  { label: 'Include' },
  { label: 'Exclude' },
  { label: 'Drill through', sub: true, active: true, icon: <Svg size={15} box={15} sw={1}><circle cx="7.500" cy="7.500" r="6.700" /><path d="M3.500 6c0 2 1 2.500 3 2.500h4.500M9 6l2.500 2.500L9 11" /></Svg> },
  { label: 'Analyze', sub: true },
  { label: 'Group', off: true },
  { label: 'Summarize' },
  { label: 'Format' },
  { label: 'New visual calculation', sub: true, icon: <Svg size={12} box={12} sw={1}><path d="M.6 5.500h2.500V11H.6zM3.500 1h3v10M6.500 3h3v4M6 11h2M8.500 8l3 3.500M11.500 8l-3 3.500" /></Svg> },
  { label: 'Set up a verified answer (preview)', icon: <Svg size={12} box={12} sw={1}><circle cx="6" cy="6" r="5.400" /><path d="M3.500 6l2 2 3.500-3.500" /></Svg> }
];

function ContextMenu() {
  return (
    <div className="absolute top-[182px] left-[483px] z-10 flex items-start text-[11px] text-[#444]">
      <ul role="menu" className="flex h-[305px] w-[208px] flex-col rounded-sm bg-white pb-0.5 shadow-[0_2px_8px_rgba(0,0,0,0.3)]">
        {MENU.map(m => (
          <li key={m.label} className="flex-1">
            <button type="button" role="menuitem" disabled={m.off}
              className={`flex h-full w-full items-center pr-[11px] whitespace-nowrap ${m.active ? 'bg-[#f2f2f0]' : ''} ${m.off ? 'text-[#a9a9a7]' : ''}`}>
              <span className="flex w-[27px] shrink-0 justify-center pl-1">{m.icon}</span>
              <span className="flex-1 text-left">{m.label}</span>
              {m.sub && <Right sw={1} />}
            </button>
          </li>
        ))}
      </ul>
      <div role="menu" className="mt-[141px] h-[25px] w-[176px] rounded-sm bg-white shadow-[0_2px_6px_rgba(0,0,0,0.3)]">
        <button type="button" role="menuitem" className="h-full w-full pl-2 text-left">Product Details</button>
      </div>
      <span role="tooltip" className="absolute top-[168px] left-[70px] h-[22px] bg-[#242422] px-[7px] leading-[22px] text-white">Drill through</span>
      <svg aria-hidden="true" width="18" height="22" viewBox="0 0 18 22" className="absolute top-[151px] left-[54px]" fill="#fff" stroke="#444" strokeWidth="1">
        <path d="M5 12.500V2.500c0-2 2.500-2 2.500 0V8c0-1.500 2.500-1.500 2.500 0v.5c.3-1.300 2.500-1.300 2.500.300v.5c.5-1.200 2.500-1 2.500.5V14c0 4-2 6.500-5.500 6.500S4 17.500 1.500 13.500C.5 11.800 2.500 10.500 3.500 11.500z" />
        <path d="M7.500 8v4M10 8.500V12M12.500 9.500V12" />
      </svg>
    </div>
  );
}

function Dots({ size = 16, stroke = '#444' }) {
  return <Svg size={size} box={16} stroke="none"><g fill={stroke}><circle cx="2" cy="8" r="1" /><circle cx="8" cy="8" r="1" /><circle cx="14" cy="8" r="1" /></g></Svg>;
}

function Canvas() {
  return (
    <main className="relative flex min-w-0 flex-1 flex-col bg-[#e5e5e5] pt-[97px] pb-[98px] pl-px">
      <div className="relative flex min-h-0 flex-1 flex-col overflow-hidden bg-[#f7f8f7] pr-[31px] pb-[51px] pl-[7px] shadow-[0_1px_5px_rgba(0,0,0,0.2)]">
        <div className="relative flex min-h-0 flex-1 flex-col border border-[#888] bg-white">
          <h2 className="pt-[6px] pl-2 text-[9px] leading-[12px] font-medium text-[#222]">Sum of Revenue</h2>
          <p className="pl-2 text-[8px] leading-[11px] text-[#666]">by Product</p>
          <div className="h-[14px] shrink-0" />
          <BarChart />
          <div className="absolute -top-px right-1.5 flex flex-col gap-2.5 *:flex *:h-7 *:w-7 *:items-center *:justify-center *:rounded-xs *:bg-[#e3e2e0] *:shadow">
            <button type="button" aria-label="Suggest a visual"><Svg size={20} box={20}><path d="M3 9v9.500h15V6h-4M8 18V2.500h5.500V18" fill="#fff" /><Bolt x={1} /></Svg></button>
            <button type="button" aria-label="Format visual"><Svg size={20} box={20}><path d="M8 10l7-8.500c1.500-1 3 .5 2 2L10 12" fill="#fff" /><path d="M1 16c3 0 2-4 4-5.500s5.500 1 4 4S4 18 1 16z" fill={B} stroke={D} /><path d="M15 11v8M11 15h8" stroke={N} strokeWidth="1.500" /></Svg></button>
          </div>
          <Handle className="-top-1.5 -left-1.5" />
          <Handle className="-top-1.5 left-1/2 -translate-x-1/2" />
          <Handle className="-top-1.5 -right-1.5" />
          <Handle className="top-1/2 -left-1.5 -translate-y-1/2" />
          <Handle className="top-1/2 -right-1.5 -translate-y-1/2" />
          <Handle className="-bottom-1.5 -left-1.5" />
          <Handle className="-bottom-1.5 left-1/2 -translate-x-1/2" />
          <Handle className="-right-1.5 -bottom-1.5" />
          <div className="absolute top-full right-px flex gap-1 pt-px *:flex *:h-6 *:w-[22px] *:items-center *:justify-center *:bg-[#fcfcfc]">
            <button type="button" aria-label="Filters on visual"><Svg size={16} box={16} stroke="#666"><path d="M.7 1.500h14.600v1.500L10 9v4.500L6.500 15V9L.7 3z" /></Svg></button>
            <button type="button" aria-label="Focus mode"><Svg size={15} box={15} stroke="#666"><path d="M8 1H1v13h13V8M10 1h4v4M14 1L8.500 6.500M1 8.500h6V14" /></Svg></button>
            <button type="button" aria-label="More options"><Dots /></button>
          </div>
        </div>
      </div>
      <ContextMenu />
    </main>
  );
}

function PageTabs() {
  return (
    <div className="flex h-[34px] shrink-0 bg-[#f0f2ed] text-[11px] text-[#333]">
      <button type="button" aria-label="Desktop layout" className="mb-1 ml-2.5 flex w-6 flex-col items-center justify-between border-b-[3px] border-[#1c7460] pt-1.5">
        <Svg w={19} h={15} stroke="#555" sw={1.4}><path d="M1 1h17v10H1zM9.500 11v2.500M6 14h7" /></Svg>
      </button>
      <button type="button" aria-label="Mobile layout" className="ml-6 flex items-center pb-1.5">
        <Svg w={13} h={20} stroke="#555" sw={1.4}><path d="M1 1h11v18H1zM5 16.500h3" /></Svg>
      </button>
      <button type="button" aria-label="Previous page" className="ml-5 text-[8px] text-[#b8b8b6]">◀</button>
      <button type="button" aria-label="Next page" className="ml-[15px] text-[8px] text-[#b8b8b6]">▶</button>
      <button type="button" className="ml-1.5 w-[74px] border-b-[3px] border-l border-b-[#1c7460] border-l-[#bbb] bg-white pt-1 font-semibold">Page 1</button>
      <button type="button" className="w-[117px] border-l border-[#ddd] bg-white pt-px">Product Details</button>
      <button type="button" aria-label="New page" className="flex w-[39px] items-center justify-center bg-[#117865] text-white"><Plus className="h-3.5 w-3.5" strokeWidth={5} /></button>
    </div>
  );
}

function PaneHeader({ title }) {
  return (
    <div className="flex h-[37px] shrink-0 items-center pr-[3px] text-[#444]">
      <h2 className="flex-1 text-[14px] font-bold text-[#2b2b2b]">{title}</h2>
      <button type="button" aria-label={`${title} options`}><Dots /></button>
      <button type="button" aria-label={`Collapse ${title}`} className="ml-[7px]"><DoubleRight /></button>
    </div>
  );
}

const CARDS = [
  ['Size and style'], ['Title', 'On'], ['Style presets'], ['Y-axis'], ['X-axis'], ['Legend', 'Off', true], ['Small multiples', '', true],
  ['Gridlines'], ['Zoom slider', 'Off'], ['Bars'], ['Data labels', 'On'], ['Plot area background'], ['Reference line'], ['Error bars']
];

function Toggle({ name, state, dim }) {
  const on = state === 'On';
  return (
    <label className={`flex h-4 w-[31px] items-center justify-center gap-1 rounded-full border text-[8px] leading-none font-normal ${on ? 'border-[#117865] bg-[#117865] text-white' : dim ? 'border-[#d0d0ce] bg-white text-[#a9a9a7]' : 'border-[#999] bg-white text-[#555]'}`}>
      <input type="checkbox" role="switch" aria-label={name} defaultChecked={on} disabled={dim} className="sr-only" />
      {on && <span>On</span>}
      <span className={`h-2 w-2 rounded-full ${on ? 'bg-white' : dim ? 'bg-[#b5b5b3]' : 'bg-[#555]'}`} />
      {!on && <span>Off</span>}
    </label>
  );
}

function FormatPane() {
  return (
    <aside className="flex w-[176px] shrink-0 flex-col border-l border-[#e3e5e0] bg-[#f0f2ed] text-[#333]">
      <div className="pr-1 pl-2"><PaneHeader title="Format" /></div>
      <label className="mx-[7px] mt-[2px] flex h-[26px] items-center gap-[7px] rounded-xs border border-[#8f8f8d] pl-[7px]">
        <Magnifier size={14} />
        <input type="search" placeholder="Search" aria-label="Search format" className="min-w-0 flex-1 bg-transparent text-[12px] outline-none placeholder:text-[#555]" />
      </label>
      <div className="mt-[13px] ml-3 flex h-[26px] items-start text-[12px]">
        <button type="button" className="h-[26px] border-b-2 border-[#117865] pb-0.5 font-semibold">Visual</button>
        <button type="button" className="ml-4 h-6">Properties</button>
        <button type="button" aria-label="More tabs" className="ml-5 flex h-6 items-center"><Dots /></button>
      </div>
      <ul className="mt-3.5 flex h-[552px] flex-col text-[11px] font-semibold">
        {CARDS.map(([name, state, dim]) => (
          <li key={name} className={`flex flex-1 items-center border-b border-[#e2e4df] pr-2 pl-2.5 ${dim ? 'text-[#a9a9a7]' : 'text-[#333]'}`}>
            <button type="button" className="flex flex-1 items-center gap-[5px] text-left whitespace-nowrap">
              <Right sw={1.4} />
              {name}
            </button>
            {state && <Toggle name={name} state={state} dim={dim} />}
          </li>
        ))}
      </ul>
    </aside>
  );
}

const WELLS = [['Y-axis', 'Product'], ['X-axis', 'Sum of Revenue'], ['Legend'], ['Small multiples'], ['Tooltips']];

function BuildPane() {
  return (
    <aside className="flex w-[176px] shrink-0 flex-col border-l border-[#e3e5e0] bg-[#f0f2ed] pr-2 pl-[7px] text-[11px] text-[#444]">
      <div className="-mr-1"><PaneHeader title="Build" /></div>
      <h3 className="h-[18px] leading-[15px]">Suggestions</h3>
      <div className="rounded-xs border border-[#a8a8a6] bg-white px-[3px] pt-0.5">
        <div className="grid grid-cols-6 place-items-center gap-y-px pb-[3px]">
          {SUGGESTIONS.map(name => (
            <button type="button" key={name} aria-label={name}
              className={`flex h-6 w-6 items-center justify-center ${name === 'clusteredBar' ? 'border border-[#777]' : ''}`}>
              <VisualIcon name={name} size={18} />
            </button>
          ))}
        </div>
        <div className="grid grid-cols-6 place-items-center border-t border-[#b5b5b3] py-[3px]">
          {EXTRA.map(name => (
            <button type="button" key={name} aria-label={name} className="flex h-6 w-6 items-center justify-center"><VisualIcon name={name} size={18} /></button>
          ))}
        </div>
      </div>
      <div className="mt-0.5">
        {WELLS.map(([name, field]) => (
          <section key={name}>
            <h3 className="h-[26px] pt-[7px] leading-[17px]">{name}</h3>
            <div className="flex flex-col gap-1 border border-dashed border-[#999] p-1">
              {field && (
                <div className="flex h-7 items-center rounded-xs border border-[#999] bg-[#fafafa] pl-[5px] whitespace-nowrap">
                  <span className="flex-1">{field}</span>
                  <button type="button" aria-label={`Remove ${field}`}><Svg size={12} box={12} stroke="#333"><path d="M.5.5l11 11M11.500.5l-11 11" /></Svg></button>
                  <span className="mx-[7px] h-4 w-px bg-[#555]" />
                  <button type="button" aria-label={`${field} menu`} className="mr-[7px] ml-0.5"><Right sw={1.2} /></button>
                </div>
              )}
              <button type="button" className="h-7 rounded-xs border border-[#999] bg-white font-semibold text-[#333]">+Add data</button>
            </div>
          </section>
        ))}
      </div>
    </aside>
  );
}

const FIELDS = [
  ['Order Date', false, true], ['Order ID', false, false], ['Product', true, false], ['Region', false, false],
  ['Revenue', true, true], ['Sales Rep', false, false], ['Unit Price', false, true], ['Units', false, true]
];

function DataPane() {
  return (
    <aside className="flex w-[175px] shrink-0 flex-col border-l border-[#e3e5e0] bg-[#f0f2ed] text-[11px] text-[#444]">
      <div className="pr-1 pl-[7px]"><PaneHeader title="Data" /></div>
      <label className="mx-1 mt-2 flex h-[23px] items-center gap-2 rounded-xs border-b border-[#999] bg-white pl-2.5 shadow-sm">
        <Magnifier size={15} flip />
        <input type="search" placeholder="Search" aria-label="Search data" className="min-w-0 flex-1 bg-transparent text-[12px] outline-none placeholder:text-[#666]" />
      </label>
      <button type="button" className="mt-[9px] flex h-[23px] items-center pl-3">
        <Down sw={1.1} />
        <span className="relative ml-[3px] flex h-4 w-[18px]">
          <Svg size={12} box={12} sw={1.4}><path d="M.7.7h10.600v10.600H.7zM.7 4h10.600M.7 8h10.600M4.200.7v10.600M8 .7v10.600" /></Svg>
          <span className="absolute right-0 -bottom-0.5 flex h-3 w-3 items-center justify-center rounded-full bg-[#117865]"><Svg size={6} box={6} stroke="#fff"><path d="M1 3l1.500 1.500L5 1.500" /></Svg></span>
        </span>
        tblSales
      </button>
      <ul className="flex h-[187px] flex-col">
        {FIELDS.map(([name, checked, sum]) => (
          <li key={name} className="flex-1">
            <label className="flex h-full items-center pl-[42px]">
              <input type="checkbox" defaultChecked={checked} className="peer sr-only" />
              <span className="flex h-3 w-3 items-center justify-center rounded-xs border border-[#b8b8b6] peer-checked:border-[#117865] peer-checked:bg-[#117865]">
                {checked && <Svg size={10} box={10} stroke="#fff"><path d="M1.500 5l2.500 2.500L8.500 3" /></Svg>}
              </span>
              <span className="w-[25px] shrink-0 pl-2">
                {sum && <Svg size={12} box={12} stroke="#444"><path d="M10.500 3V1H1.500l4.500 5-4.500 5h9V9" /></Svg>}
              </span>
              {name}
            </label>
          </li>
        ))}
      </ul>
    </aside>
  );
}

const RAIL = [
  ['Data', <><ellipse cx="9" cy="3.500" rx="6" ry="2.500" fill="#fff" /><path d="M3 3.500v11c0 3.500 12 3.500 12 0v-11" /></>],
  ['Build', <><path d="M1.500 8.500H6V16H1.500zM6 1.500h4.500V16H6zM10.500 5.500H15V8" /><path d="M9.700 9.500v6c0 2 7.600 2 7.600 0v-6" fill="#fff" stroke={O} /><ellipse cx="13.500" cy="9.500" rx="3.800" ry="1.500" fill="#fff" stroke={O} /></>],
  ['Format', <><path d="M1.500 8.500H6V14M1.500 8.500V16H4M6 1.500h4.500V10M6 1.500V14M10.500 5.500H14" /><path d="M10 12l5.500-6.500c1-.8 2.500.300 1.800 1.500L12 14" fill="#fff" /><path d="M4 16.500c2.500 0 2-3 4-4s4.500.5 3.500 3-5 2.500-7.500 1z" fill={B} stroke={D} /></>],
  ['Text', <><path d="M9 16.500H1.500v-15h14V5" /><path d="M4 12l3.500-8L10 9.500M5.500 9h4" stroke={D} /><path d="M8 16l1-3.500L15.500 6 17.500 8 11.500 15z" fill="#fff" stroke={D} /></>],
  ['Selection', <><path d="M6 1.500h11v9H6z" fill="#fbc77a" stroke={O} /><path d="M.8 7.500h11v8h-11z" fill="#fff" /><path d="M10 6l7 6.500-3.500.5 2 4-1.500.5-2-4-2 2z" fill={K} /></>],
  ['Bookmarks', <path d="M4 .8h10v16l-5-4.500-5 4.500z" />],
  ['Sync slicers', <><path d="M1 5.500A4.500 4.500 0 0 1 9 3M10 4.500A4.500 4.500 0 0 1 2 8M9 .5V3H6.500M2 10.500V8h2.500" stroke={N} strokeWidth="1.400" /><path d="M11 2.500h6V8M1.500 12v4.500H9M4 13h4" /><Funnel x={9} y={8} /></>],
  ['Performance', <><path d="M8.500 16.500H1.500v-15h13V8M4 13V8h2v5M7 13V5h2.500v5" /><circle cx="13" cy="13" r="3.800" fill="#fff" stroke={D} /><path d="M13 10.500V13l1.500 1M11.500 8h3" stroke={D} /></>]
];

function RightRail() {
  return (
    <nav className="flex w-[31px] shrink-0 flex-col border-l border-[#dcdedb] bg-[#f9faf8]">
      {RAIL.map(([name, glyph], i) => (
        <button type="button" key={name} aria-label={name}
          className={`flex h-[31px] items-center justify-center ${i < 3 ? 'border-b border-[#888] bg-[#e1e0de]' : ''}`}>
          <Svg size={18}>{glyph}</Svg>
        </button>
      ))}
      <button type="button" aria-label="Add pane" className="mt-1 flex h-[38px] items-center justify-center border-t border-[#ddd] text-[#333]"><Svg size={18} stroke="#333" sw={1.5}><path d="M9 0v18M0 9h18" /></Svg></button>
      <button type="button" aria-label="Pane settings" className="mt-auto flex h-[31px] items-center justify-center border-t border-[#ddd]"><Gear size={20} stroke="#444" /></button>
    </nav>
  );
}

function StatusBar() {
  return (
    <footer className="h-3.5 shrink-0 overflow-hidden border-t border-[#dfe1dc] bg-[#f0f2ed] text-[11px] text-[#555]">
      <div className="flex h-6 items-center pr-[17px] pl-1">
        <span>Page 1 of 2</span>
        <button type="button" aria-label="Zoom out" className="ml-auto font-bold">-</button>
        <input type="range" min="0" max="100" defaultValue="22" aria-label="Zoom"
          className="mx-1 h-3 w-[97px] appearance-none bg-transparent [&::-webkit-slider-runnable-track]:h-px [&::-webkit-slider-runnable-track]:bg-[#999] [&::-webkit-slider-thumb]:-mt-1 [&::-webkit-slider-thumb]:h-2.5 [&::-webkit-slider-thumb]:w-1 [&::-webkit-slider-thumb]:appearance-none [&::-webkit-slider-thumb]:bg-[#555]" />
        <button type="button" aria-label="Zoom in" className="ml-0.5 font-bold">+</button>
        <span className="ml-3.5">52%</span>
        <button type="button" aria-label="Fit to page" className="ml-[18px]"><Svg w={16} h={14} stroke="#555"><path d="M1 1h14v12H1zM3.500 5.500v-2h2M10.500 3.500h2v2M3.500 8.500v2h2M12.500 8.500v2h-2" /></Svg></button>
      </div>
    </footer>
  );
}

export default function App() {
  return (
    <div className="flex h-screen flex-col overflow-hidden bg-[#fafbfa] font-['Open_Sans','Noto_Sans',sans-serif]">
      <TitleBar />
      <Tabs />
      <Ribbon />
      <div className="flex min-h-0 flex-1 border-t border-[#d6d6d4]">
        <LeftRail />
        <div className="flex min-w-0 flex-1 flex-col">
          <div className="flex min-h-0 flex-1">
            <Canvas />
            <section aria-label="Filters" className="flex w-8 shrink-0 flex-col items-center border-l border-[#ccc] bg-white pt-3 text-[#333]">
              <button type="button" aria-label="Expand filters"><DoubleRight className="rotate-180" /></button>
              <Svg size={14} box={14} stroke="#333" className="mt-2 ml-1 rotate-90"><path d="M1 2h12v1L8.500 7.500v4l-3 1.500V7.500L1 3z" /></Svg>
              <h2 className="mt-1.5 text-[14px] leading-[18px] font-semibold [writing-mode:vertical-rl]">Filters</h2>
            </section>
          </div>
          <PageTabs />
        </div>
        <FormatPane />
        <BuildPane />
        <DataPane />
        <RightRail />
      </div>
      <StatusBar />
    </div>
  );
}
